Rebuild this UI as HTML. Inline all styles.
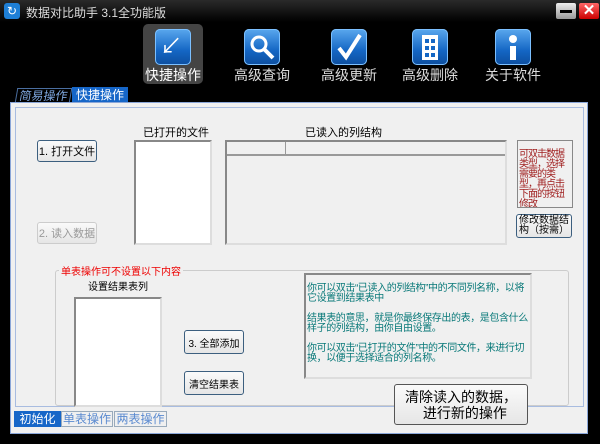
<!DOCTYPE html><html><head><meta charset="utf-8"><style>
*{margin:0;padding:0;box-sizing:border-box}
body{width:600px;height:444px;background:#000;position:relative;overflow:hidden;font-family:"Liberation Sans","Noto Sans CJK SC",sans-serif;font-size:12px;color:#000}
.a{position:absolute}
.ico{position:absolute;width:36px;height:36px;border-radius:5px;background:linear-gradient(#5aa8ee,#1466c4 60%,#0d4e9e);box-shadow:inset 0 0 0 1px #7cc0ff}
.lbl{position:absolute;color:#ddd;font-size:14px;width:80px;text-align:center}
.btn{position:absolute;background:linear-gradient(#fafafa,#e6e6e6);border:1px solid #3c5f7f;border-radius:3px;font-size:11px;text-align:center;display:flex;align-items:center;justify-content:center}
.box{position:absolute;background:#fff;border:2px solid #888;border-right-color:#ddd;border-bottom-color:#ddd}
</style></head><body>
<div class="a" style="left:0;top:0;width:600px;height:22px;background:linear-gradient(#2a2a2a,#000)"></div>
<div class="a" style="left:4px;top:3px;width:16px;height:16px;background:#1e7fd6;border-radius:3px;color:#fff;font-size:12px;line-height:16px;text-align:center">↻</div>
<div class="a" style="left:26px;top:4px;color:#ddd;font-size:12px">数据对比助手 3.1全功能版</div>
<div class="a" style="left:556px;top:3px;width:20px;height:16px;background:linear-gradient(#eee,#999);border-radius:2px"><div class="a" style="left:4px;top:7px;width:12px;height:3px;background:#000"></div></div>
<div class="a" style="left:579px;top:3px;width:20px;height:16px;background:linear-gradient(#f66,#c00);border-radius:2px;color:#fff;font-size:15px;line-height:16px;text-align:center;font-weight:bold">✕</div>
<div class="a" style="left:143px;top:24px;width:60px;height:60px;background:#444;border-radius:5px"></div>
<div class="ico" style="left:155px;top:29px"></div>
<div class="a" style="left:160px;top:36px;color:#fff;font-size:22px;line-height:22px">↙</div>
<div class="lbl" style="left:133px;top:65px;color:#fff">快捷操作</div>
<div class="ico" style="left:244px;top:29px"></div>
<svg class="a" style="left:244px;top:29px" width="36" height="36"><circle cx="15" cy="15" r="7" fill="none" stroke="#fff" stroke-width="3"/><path d="M20 20l9 9" stroke="#fff" stroke-width="4"/></svg>
<div class="lbl" style="left:222px;top:65px">高级查询</div>
<div class="ico" style="left:331px;top:29px"></div>
<svg class="a" style="left:331px;top:29px" width="36" height="36"><path d="M8 19l7 9 14-22" stroke="#fff" stroke-width="4" fill="none"/></svg>
<div class="lbl" style="left:309px;top:65px">高级更新</div>
<div class="ico" style="left:412px;top:29px"></div>
<svg class="a" style="left:412px;top:29px" width="36" height="36"><rect x="10" y="6" width="16" height="25" fill="#fff"/><g fill="#1466c4"><rect x="13" y="10" width="4" height="4"/><rect x="19" y="10" width="4" height="4"/><rect x="13" y="17" width="4" height="4"/><rect x="19" y="17" width="4" height="4"/><rect x="13" y="24" width="4" height="4"/><rect x="19" y="24" width="4" height="4"/></g></svg>
<div class="lbl" style="left:390px;top:65px">高级删除</div>
<div class="ico" style="left:495px;top:29px"></div>
<svg class="a" style="left:495px;top:29px" width="36" height="36"><circle cx="18" cy="10" r="4" fill="#fff"/><rect x="15" y="17" width="6" height="14" fill="#fff"/></svg>
<div class="lbl" style="left:473px;top:65px">关于软件</div>
<div class="a" style="left:16px;top:88px;width:55px;height:15px;border:1px solid #4a6ea0;border-bottom:none;color:#7fa8e0;font-size:12px;text-align:center;line-height:14px;transform:skewX(-10deg)">简易操作</div>
<div class="a" style="left:72px;top:87px;width:56px;height:16px;background:#1666c8;color:#fff;font-size:12px;text-align:center;line-height:16px">快捷操作</div>
<div class="a" style="left:10px;top:102px;width:578px;height:332px;background:#f0f0f0;border:1px solid #8aa6d8"></div>
<div class="a" style="left:15px;top:107px;width:569px;height:300px;border:1px solid #a8bce0"></div>
<div class="btn" style="left:37px;top:140px;width:60px;height:22px">1. 打开文件</div>
<div class="btn" style="left:37px;top:222px;width:60px;height:22px;color:#999;border-color:#ccc">2. 读入数据</div>
<div class="a" style="left:143px;top:124px;font-size:11px">已打开的文件</div>
<div class="box" style="left:134px;top:140px;width:78px;height:105px"></div>
<div class="a" style="left:305px;top:124px;font-size:11px">已读入的列结构</div>
<div class="box" style="left:225px;top:140px;width:282px;height:105px;background:#f0f0f0"></div>
<div class="a" style="left:227px;top:142px;width:278px;height:14px;border-bottom:2px solid #999"></div>
<div class="a" style="left:285px;top:142px;width:1px;height:14px;background:#999"></div>
<div class="a" style="left:517px;top:140px;width:56px;height:68px;border:1px solid #888;color:#a02020;font-size:10px;line-height:10px;padding:9px 1px 0 1px;letter-spacing:-1px;overflow:hidden">可双击数据类型，选择需要的类型，再点击下面的按钮修改</div>
<div class="btn" style="left:516px;top:214px;width:56px;height:24px;line-height:10px;font-size:10px">修改数据结构（按需）</div>
<div class="a" style="left:55px;top:270px;width:514px;height:136px;border:1px solid #ccc;border-radius:3px"></div>
<div class="a" style="left:59px;top:263px;background:#f0f0f0;color:#e00;font-size:10px;padding:0 2px">单表操作可不设置以下内容</div>
<div class="a" style="left:88px;top:278px;font-size:10px">设置结果表列</div>
<div class="box" style="left:74px;top:297px;width:88px;height:110px"></div>
<div class="btn" style="left:184px;top:330px;width:60px;height:24px;font-size:10px">3. 全部添加</div>
<div class="btn" style="left:184px;top:371px;width:60px;height:24px;font-size:10px">清空结果表</div>
<div class="a" style="left:304px;top:273px;width:228px;height:106px;border:2px solid #888;border-right-color:#ddd;border-bottom-color:#ddd;color:#077878;font-size:10px;line-height:10px;padding:9px 2px 0 1px;letter-spacing:-0.4px">你可以双击“已读入的列结构”中的不同列名称，以将它设置到结果表中<br><br>结果表的意思，就是你最终保存出的表，是包含什么样子的列结构，由你自由设置。<br><br>你可以双击“已打开的文件”中的不同文件，来进行切换，以便于选择适合的列名称。</div>
<div class="btn" style="left:394px;top:384px;width:134px;height:41px;font-size:14px;line-height:16px;border-color:#555">清除读入的数据，<br>&nbsp;&nbsp;进行新的操作</div>
<div class="a" style="left:14px;top:411px;width:47px;height:16px;background:#1666c8;color:#fff;font-size:12px;text-align:center;line-height:16px">初始化</div>
<div class="a" style="left:61px;top:411px;width:52px;height:16px;border:1px solid #9ab;color:#5a8ad0;font-size:12px;text-align:center;line-height:14px">单表操作</div>
<div class="a" style="left:114px;top:411px;width:53px;height:16px;border:1px solid #9ab;color:#5a8ad0;font-size:12px;text-align:center;line-height:14px">两表操作</div>
</body></html>
